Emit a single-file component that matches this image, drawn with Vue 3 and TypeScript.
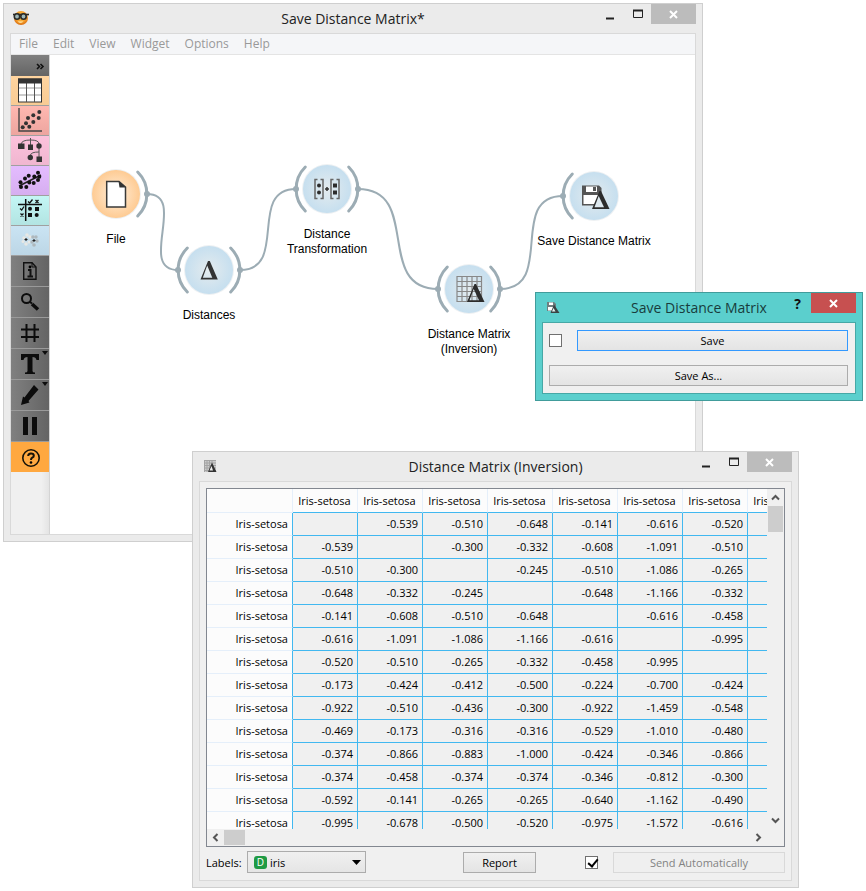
<script setup lang="ts">
import { computed, ref } from 'vue'

interface WidgetNode {
  id: string
  title: string[]
  x: number
  y: number
  tone: 'orange' | 'blue'
  input: boolean
  output: boolean
}

const menus: string[] = ['File', 'Edit', 'View', 'Widget', 'Options', 'Help']

const nodes: WidgetNode[] = [
  { id: 'file', title: ['File'], x: 66, y: 139, tone: 'orange', input: false, output: true },
  { id: 'distances', title: ['Distances'], x: 159, y: 215, tone: 'blue', input: true, output: true },
  { id: 'transform', title: ['Distance', 'Transformation'], x: 277, y: 134, tone: 'blue', input: true, output: true },
  { id: 'matrix', title: ['Distance Matrix', '(Inversion)'], x: 419, y: 234, tone: 'blue', input: true, output: true },
  { id: 'save', title: ['Save Distance Matrix'], x: 544, y: 141, tone: 'blue', input: true, output: false },
]

const ANCHOR = 31

const links = computed<string[]>(() =>
  nodes.slice(1).map((to, i) => {
    const from = nodes[i]
    const x1 = from.x + ANCHOR
    const x2 = to.x - ANCHOR
    const reach = Math.round(Math.hypot(x2 - x1, to.y - from.y) / 2)
    return `M${x1} ${from.y}C${x1 + reach} ${from.y} ${x2 - reach} ${to.y} ${x2} ${to.y}`
  }),
)

const columns: string[] = Array.from({ length: 8 }, () => 'Iris-setosa')

const rows: string[][] = [
  ['', '-0.539', '-0.510', '-0.648', '-0.141', '-0.616', '-0.520', ''],
  ['-0.539', '', '-0.300', '-0.332', '-0.608', '-1.091', '-0.510', ''],
  ['-0.510', '-0.300', '', '-0.245', '-0.510', '-1.086', '-0.265', ''],
  ['-0.648', '-0.332', '-0.245', '', '-0.648', '-1.166', '-0.332', ''],
  ['-0.141', '-0.608', '-0.510', '-0.648', '', '-0.616', '-0.458', ''],
  ['-0.616', '-1.091', '-1.086', '-1.166', '-0.616', '', '-0.995', ''],
  ['-0.520', '-0.510', '-0.265', '-0.332', '-0.458', '-0.995', '', ''],
  ['-0.173', '-0.424', '-0.412', '-0.500', '-0.224', '-0.700', '-0.424', ''],
  ['-0.922', '-0.510', '-0.436', '-0.300', '-0.922', '-1.459', '-0.548', ''],
  ['-0.469', '-0.173', '-0.316', '-0.316', '-0.529', '-1.010', '-0.480', ''],
  ['-0.374', '-0.866', '-0.883', '-1.000', '-0.424', '-0.346', '-0.866', ''],
  ['-0.374', '-0.458', '-0.374', '-0.374', '-0.346', '-0.812', '-0.300', ''],
  ['-0.592', '-0.141', '-0.265', '-0.265', '-0.640', '-1.162', '-0.490', ''],
  ['-0.995', '-0.678', '-0.500', '-0.520', '-0.975', '-1.572', '-0.616', ''],
]

const label = ref('iris')
const autoSave = ref(false)
const autoSend = ref(true)
</script>

<template>
  <main class="desktop">
    <section class="window main-window">
      <header class="titlebar">
        <svg class="app-icon" viewBox="0 0 18 16" width="18" height="16">
          <defs>
            <radialGradient id="face" cx=".5" cy=".4" r=".6">
              <stop offset="0" stop-color="#ffd257" />
              <stop offset=".6" stop-color="#f8a22c" />
              <stop offset="1" stop-color="#d96f12" />
            </radialGradient>
          </defs>
          <circle cx="9" cy="8" r="7" fill="url(#face)" />
          <path d="M1 4.500H17" stroke="#2b2b28" stroke-width="1.600" />
          <circle cx="5" cy="6.500" r="2.700" fill="#9fb8b8" stroke="#2b2b28" stroke-width="1.600" />
          <circle cx="11.500" cy="6.500" r="2.700" fill="#9fb8b8" stroke="#2b2b28" stroke-width="1.600" />
          <path d="M5.500 11.500Q8.500 14 11.500 11.500Z" fill="#fff2b8" />
        </svg>
        <h1>Save Distance Matrix*</h1>
        <div class="controls">
          <button type="button" aria-label="Minimize"><svg width="9" height="11"><path d="M0 9.500H8" stroke="#222" stroke-width="2" /></svg></button>
          <button type="button" aria-label="Maximize"><svg width="10" height="11"><path d="M.5 1V8.500H9.500V1" fill="none" stroke="#222" /><path d="M0 1.500H10" stroke="#222" stroke-width="2" /></svg></button>
          <button type="button" class="close" aria-label="Close"><svg width="9" height="9"><path d="M1 1L8 8M8 1L1 8" stroke="#fff" stroke-width="2" /></svg></button>
        </div>
      </header>
      <div class="frame">
        <nav class="menubar">
          <button v-for="m in menus" :key="m" type="button">{{ m }}</button>
        </nav>
        <div class="workspace">
          <aside class="toolbox">
            <button type="button" class="expand" aria-label="Expand">
              <svg width="38" height="20"><path d="M26 8L28.500 10.500L26 13M29.500 8L32 10.500L29.500 13" fill="none" stroke="#111" stroke-width="1.600" /></svg>
            </button>
            <button type="button" class="cat data" aria-label="Data">
              <svg width="38" height="29">
                <rect x="7.500" y="3" width="23" height="23" fill="#fff" stroke="#333" />
                <path d="M8 12H30M8 19H30" stroke="#ccc" stroke-width="2" />
                <path d="M15.500 6V26M23.500 6V26" stroke="#555" />
                <path d="M7 5H31" stroke="#333" stroke-width="5" />
              </svg>
            </button>
            <button type="button" class="cat visualize" aria-label="Visualize">
              <svg width="38" height="29">
                <path d="M8 2V25H31" fill="none" stroke="#444" stroke-width="1.400" />
                <g fill="#333"><circle cx="28.300" cy="6" r="2" /><circle cx="22.300" cy="9.300" r="2" /><circle cx="27.700" cy="12" r="2" /><circle cx="17" cy="12" r="2" /><circle cx="22.300" cy="16" r="2" /><circle cx="15" cy="17.300" r="2" /><circle cx="18.300" cy="20.700" r="2" /><circle cx="11.700" cy="21.300" r="2" /></g>
              </svg>
            </button>
            <button type="button" class="cat model" aria-label="Model">
              <svg width="38" height="29">
                <path d="M10 8Q11 4 19.500 4Q28 4 28 8M19.500 2V9M28 12V21M19.500 19Q20 16 28 16" fill="none" stroke="#555" />
                <g fill="#333"><rect x="7" y="7.500" width="6.500" height="5.500" /><rect x="17" y="8.500" width="5" height="5.500" /><circle cx="28" cy="10" r="2.700" /><circle cx="19.300" cy="21.500" r="2.700" /><rect x="25.500" y="20.500" width="5.500" height="5.500" /></g>
              </svg>
            </button>
            <button type="button" class="cat regression" aria-label="Regression">
              <svg width="38" height="29">
                <path d="M8 20L30 9" stroke="#222" stroke-width="1.600" />
                <g fill="#111"><circle cx="27" cy="6.700" r="2" /><circle cx="17.700" cy="9.700" r="2" /><circle cx="23.300" cy="10.500" r="2" /><circle cx="28.300" cy="10.700" r="2" /><circle cx="14" cy="12.500" r="2" /><circle cx="9.500" cy="16.300" r="2" /><circle cx="18.300" cy="16.500" r="2" /><circle cx="22.700" cy="17" r="2" /><circle cx="27" cy="14" r="2" /><circle cx="10" cy="21" r="2" /><circle cx="15.300" cy="21" r="2" /></g>
              </svg>
            </button>
            <button type="button" class="cat evaluate" aria-label="Evaluate">
              <svg width="38" height="29">
                <path d="M14.700 3V25M7 8.500H31" stroke="#111" stroke-width="1.500" />
                <path d="M17 5.500L18.700 7L21.500 3.500M24.500 4L27.500 7M27.500 4L24.500 7M9 12.500L10.700 14L13 10.500M9.500 17.500L12.500 20.500M12.500 17.500L9.500 20.500" fill="none" stroke="#111" stroke-width="1.300" />
                <g fill="#111"><circle cx="19" cy="12.700" r="2" /><rect x="24" y="11" width="4" height="4" /><rect x="17" y="17" width="4" height="4" /><circle cx="25.700" cy="19" r="2" /></g>
              </svg>
            </button>
            <button type="button" class="cat unsupervised" aria-label="Unsupervised">
              <svg width="38" height="29">
                <g fill="#e8e8e4"><circle cx="13" cy="12" r="1.800" /><circle cx="16" cy="9" r="1.800" /><circle cx="19" cy="11" r="1.800" /><circle cx="12" cy="15.500" r="1.500" /><circle cx="15" cy="18" r="1.800" /><circle cx="18" cy="16" r="1.500" /></g>
                <g fill="#aeb8bd"><circle cx="22" cy="11" r="1.800" /><circle cx="25" cy="11" r="1.700" /><circle cx="26" cy="15" r="1.700" /><circle cx="21" cy="16" r="1.700" /><circle cx="23" cy="19" r="1.800" /></g>
                <path d="M13.500 13.500H16.500M15 12V15M21.500 14.500H24.500M23 13V16" stroke="#222" stroke-width="1.100" />
              </svg>
            </button>
            <button type="button" class="tool" aria-label="Info">
              <svg width="38" height="30">
                <path d="M12.700 6.700H21L25 11V23.300H12.700Z" fill="none" stroke="#111" stroke-width="1.400" />
                <path d="M21 6.500V11H25" fill="none" stroke="#111" />
                <path d="M17 14H19.500V20M16.500 20.500H22" fill="none" stroke="#111" stroke-width="2" /><circle cx="19" cy="11" r="1.400" />
              </svg>
            </button>
            <button type="button" class="tool" aria-label="Zoom">
              <svg width="38" height="30"><circle cx="15.500" cy="11.500" r="4.500" fill="none" stroke="#0c0c0c" stroke-width="2" /><path d="M19 15L21 16.500" stroke="#0c0c0c" stroke-width="2" /><path d="M21 17L27 22.500" stroke="#0c0c0c" stroke-width="3.500" /></svg>
            </button>
            <button type="button" class="tool" aria-label="Grid">
              <svg width="38" height="30"><path d="M15.500 6V24M23.500 6V24M10 11.500H28M10 19H28" stroke="#0c0c0c" stroke-width="2" /></svg>
            </button>
            <button type="button" class="tool" aria-label="Text annotation">
              <svg width="38" height="30"><path d="M10 5H28V11H25.500Q25 8 21.500 8V22Q21.500 23.500 24 23.500V25H14V23.500Q16.500 23.500 16.500 22V8Q13 8 12.500 11H10Z" fill="#0c0c0c" /><path d="M31 2H37L34 6Z" fill="#0c0c0c" /></svg>
            </button>
            <button type="button" class="tool" aria-label="Arrow annotation">
              <svg width="38" height="30"><path d="M23 5L27.500 9.500L17.500 21L18.500 22.500L10 25L12 16.500L13.500 17.500Z" fill="#0c0c0c" /><path d="M31 2H37L34 6Z" fill="#0c0c0c" /></svg>
            </button>
            <button type="button" class="tool" aria-label="Pause">
              <svg width="38" height="30"><path d="M14.500 6V24M23.500 6V24" stroke="#0c0c0c" stroke-width="5" /></svg>
            </button>
            <button type="button" class="help" aria-label="Help">
              <svg width="38" height="30"><circle cx="20" cy="16" r="8.200" fill="none" stroke="#161208" stroke-width="1.600" /><path d="M17.200 14Q17.200 11.500 20 11.500Q22.800 11.500 22.800 13.700Q22.800 15 21.300 15.700Q20 16.500 20 18" fill="none" stroke="#161208" stroke-width="2" /><circle cx="20" cy="20.500" r="1.300" /></svg>
            </button>
          </aside>
          <div class="canvas">
            <svg class="links"><path v-for="d in links" :key="d" :d="d" /></svg>
            <div v-for="n in nodes" :key="n.id" class="node" :style="{ left: n.x + 'px', top: n.y + 'px' }">
              <svg class="glyph" viewBox="-36 -36 72 72" width="72" height="72">
                <defs>
                  <radialGradient :id="'disc-' + n.id">
                    <stop offset="0" :stop-color="n.tone === 'orange' ? '#ffefdc' : '#e4ebee'" />
                    <stop offset="1" :stop-color="n.tone === 'orange' ? '#fecb93' : '#c6dfef'" />
                  </radialGradient>
                </defs>
                <circle r="25" fill="#eef1f3" />
                <circle r="24" :fill="`url(#disc-${n.id})`" />
                <g v-if="n.input" class="anchor">
                  <path d="M-21.700 -22A31 31 0 0 0 -21.700 22" /><circle cx="-31" cy="0" r="3" />
                </g>
                <g v-if="n.output" class="anchor">
                  <path d="M21.700 -22A31 31 0 0 1 21.700 22" /><circle cx="31" cy="0" r="3" />
                </g>
                <g v-if="n.id === 'file'">
                  <path d="M-9.300 -12.500H3L9.500 -7V13H-9.300Z" fill="#fff" stroke="#3a3a38" stroke-width="1.500" />
                  <path d="M2.500 -13L10 -6.500H3.500Z" fill="#333" />
                </g>
                <path v-else-if="n.id === 'distances'" fill="#333" fill-rule="evenodd" d="M-1 -9H.8L8.800 9.500H-8.500ZM-1.800 -4.500L-6.200 7.800H3.300Z" />
                <g v-else-if="n.id === 'transform'">
                  <path d="M-9.500 -9.500H-12V9.500H-9.500M-6.500 -9.500H-4V9.500H-6.500M6.500 -9.500H4V9.500H6.500M9.500 -9.500H12V9.500H9.500" fill="none" stroke="#666" stroke-width="1.500" />
                  <g fill="#2c2c2c"><circle cx="-8" cy="-3.500" r="2" /><circle cx="-8" cy="3.500" r="2" /><rect x="6" y="-5.500" width="4" height="4" /><rect x="6" y="1.500" width="4" height="4" /></g>
                  <path d="M-2 0H2M0 -2V2" stroke="#333" stroke-width="1.500" />
                </g>
                <g v-else-if="n.id === 'matrix'">
                  <path d="M-12 -12.500H12.500V12.500H-12ZM-12 -7.500H12.500M-12 -2.500H12.500M-12 2.500H12.500M-12 7.500H12.500M-7 -12.500V12.500M-2 -12.500V12.500M3 -12.500V12.500M8 -12.500V12.500" fill="none" stroke="#888" stroke-width="1.200" />
                  <path d="M5.500 -5H7L15.500 13H-2ZM4.700 0L.5 11.300H10Z" fill="#2c2c2c" fill-rule="evenodd" />
                </g>
                <g v-else>
                  <path d="M-12 -10.500H5L7.500 -8V9.500H-12Z" fill="#555" />
                  <rect x="-8" y="-9.500" width="11" height="5.500" fill="#fff" /><rect x="-1" y="-9" width="3" height="4" fill="#555" />
                  <rect x="-10.500" y="-1" width="16" height="9" fill="#fff" />
                  <path d="M5.500 -5H7L15.500 13H-2Z" fill="#2c2c2c" /><path d="M4.700 0L.5 11.300H10Z" fill="#dde8ee" />
                </g>
              </svg>
              <div class="caption"><div v-for="t in n.title" :key="t">{{ t }}</div></div>
            </div>
          </div>
        </div>
      </div>
    </section>

    <section class="window dialog">
      <header class="titlebar">
        <svg class="app-icon" viewBox="0 0 18 16" width="18" height="16">
          <path d="M3 3H10L12 5V12H3Z" fill="#6f7f80" /><path d="M5 3.500H9V6H5ZM4 8H9V11.500H4Z" fill="#fff" />
          <path d="M10 5.500L15.500 14H6.500Z" fill="#3a4444" /><path d="M9.500 9L11.500 12.500H8Z" fill="#e6f4f4" />
        </svg>
        <h2>Save Distance Matrix</h2>
        <div class="controls">
          <button type="button" class="hint">?</button>
          <button type="button" class="close" aria-label="Close"><svg width="9" height="9"><path d="M1 1L8 8M8 1L1 8" stroke="#fff" stroke-width="2" /></svg></button>
        </div>
      </header>
      <form class="frame save-form" @submit.prevent>
        <div class="save-row">
          <input v-model="autoSave" type="checkbox" aria-label="Save automatically" />
          <button type="submit" class="push primary">Save</button>
        </div>
        <button type="button" class="push">Save As...</button>
      </form>
    </section>

    <section class="window matrix-window">
      <header class="titlebar">
        <svg class="app-icon" viewBox="0 0 18 16" width="18" height="16">
          <rect x="3" y="2" width="12" height="12" fill="#ccc" />
          <path d="M3.500 2V14M6 2V14M8.500 2V14M11 2V14M3 2.500H15M3 5H15M3 7.500H15M3 10H15M3 12.500H15" stroke="#a4a4a4" />
          <path d="M11 4.500L15.500 14H7Z" fill="#333" /><path d="M10.500 8L12 12.500H8.500Z" fill="#eee" />
        </svg>
        <h2>Distance Matrix (Inversion)</h2>
        <div class="controls">
          <button type="button" aria-label="Minimize"><svg width="9" height="11"><path d="M0 9.500H8" stroke="#222" stroke-width="2" /></svg></button>
          <button type="button" aria-label="Maximize"><svg width="10" height="11"><path d="M.5 1V8.500H9.500V1" fill="none" stroke="#222" /><path d="M0 1.500H10" stroke="#222" stroke-width="2" /></svg></button>
          <button type="button" class="close" aria-label="Close"><svg width="9" height="9"><path d="M1 1L8 8M8 1L1 8" stroke="#fff" stroke-width="2" /></svg></button>
        </div>
      </header>
      <div class="frame matrix-body">
        <div class="table-box">
          <div class="viewport">
            <table>
              <thead>
                <tr><td class="corner"></td><th v-for="(c, i) in columns" :key="i" scope="col">{{ c }}</th></tr>
              </thead>
              <tbody>
                <tr v-for="(r, i) in rows" :key="i">
                  <th scope="row">Iris-setosa</th>
                  <td v-for="(v, j) in r" :key="j">{{ v }}</td>
                </tr>
              </tbody>
            </table>
          </div>
          <div class="vbar">
            <button type="button" aria-label="Scroll up"><svg width="9" height="7"><path d="M1 5.500L4.500 2L8 5.500" fill="none" stroke="#555" stroke-width="2" /></svg></button>
            <div class="thumb"></div>
            <button type="button" aria-label="Scroll down"><svg width="9" height="7"><path d="M1 1.500L4.500 5L8 1.500" fill="none" stroke="#555" stroke-width="2" /></svg></button>
          </div>
          <div class="hbar">
            <button type="button" aria-label="Scroll left"><svg width="7" height="9"><path d="M5.500 1L2 4.500L5.500 8" fill="none" stroke="#555" stroke-width="2" /></svg></button>
            <div class="thumb"></div>
            <button type="button" aria-label="Scroll right"><svg width="7" height="9"><path d="M1.500 1L5 4.500L1.500 8" fill="none" stroke="#555" stroke-width="2" /></svg></button>
          </div>
        </div>
        <div class="footer">
          <div class="labels">
            <label for="labels">Labels:</label>
            <div class="combo">
              <span class="badge">D</span>
              <select id="labels" v-model="label"><option>iris</option></select>
              <svg class="arrow" width="9" height="5"><path d="M0 0H9L4.500 5Z" fill="#000" /></svg>
            </div>
          </div>
          <button type="button" class="push report">Report</button>
          <div class="send">
            <input v-model="autoSend" type="checkbox" aria-label="Send automatically" />
            <button type="button" class="push" disabled>Send Automatically</button>
          </div>
        </div>
      </div>
    </section>
  </main>
</template>

<style>
body {
  background: #fff;
}
</style>

<style scoped>
.desktop {
  position: relative;
  min-height: 100vh;
  overflow: hidden;
  font-family: 'Open Sans', 'Noto Sans', sans-serif;
  font-size: 11px;
  color: #000;
}
.desktop * {
  box-sizing: border-box;
}
button,
select {
  font: inherit;
  color: inherit;
  margin: 0;
  padding: 0;
  border: 0;
  border-radius: 0;
  background: none;
}
svg {
  display: block;
}
.window {
  position: absolute;
  padding: 0 6px 6px;
  border: 1px solid #cfcfcf;
  background: #ebebeb;
}
.main-window {
  top: 3px;
  left: 3px;
  right: 163px;
}
.dialog {
  top: 292px;
  left: 535px;
  right: 3px;
  border-color: #419c9b;
  background: #5bcfcd;
}
.matrix-window {
  top: 451px;
  left: 192px;
  right: 67px;
}
.titlebar {
  display: grid;
  grid-template-columns: 1fr auto 1fr;
  height: 29px;
}
.app-icon {
  margin: 6px 0 0 2px;
}
h1,
h2 {
  margin: 0;
  font-size: 14px;
  line-height: 30px;
  font-weight: 400;
  color: #222;
  white-space: nowrap;
}
.dialog h2 {
  color: #183c3c;
}
.controls {
  display: flex;
  justify-content: flex-end;
}
.controls button {
  display: flex;
  align-items: center;
  justify-content: center;
  width: 27px;
  height: 20px;
}
.controls .close {
  width: 45px;
  background: #bcbcbc;
}
.dialog .controls .close {
  background: #c75050;
}
.controls .hint {
  font-size: 14px;
  font-weight: 700;
  color: #111;
}
.frame {
  border: 1px solid #d9d9d9;
  background: #f0f0f0;
}
.menubar {
  display: flex;
  height: 21px;
  padding-left: 1px;
  border-bottom: 1px solid #e4e4e4;
  background: #f5f6f8;
}
.menubar button {
  padding: 0 8px 0 7px;
  font-size: 12px;
  line-height: 20px;
  color: #999;
}
.workspace {
  display: flex;
}
.toolbox {
  flex: none;
  width: 39px;
  border-right: 1px solid #d4d4d4;
  background: linear-gradient(90deg, #f0f0f0 80%, #e4e4e4);
}
.toolbox button {
  display: block;
  width: 100%;
}
.toolbox .expand {
  height: 21px;
  background: linear-gradient(#808080, #646464);
}
.toolbox .cat {
  height: 30px;
  border-bottom: 1px solid #a0a0a0;
}
.toolbox .data { background: linear-gradient(#ffd49f, #f8cb94); }
.toolbox .visualize { background: linear-gradient(#ffb8b1, #eda59f); }
.toolbox .model { background: linear-gradient(#fcc2dc, #f0b6d0); }
.toolbox .regression { background: linear-gradient(#e4bcff, #d6aef0); }
.toolbox .evaluate { background: linear-gradient(#c4f6f5, #b2e4e2); }
.toolbox .unsupervised { background: linear-gradient(#cae4f3, #bcd6e6); }
.toolbox .tool {
  height: 31px;
  border-bottom: 1px solid #9a9a9a;
  background: linear-gradient(90deg, #808080, #646464);
}
.toolbox .help {
  height: 30px;
  background: #ffa840;
}
.canvas {
  position: relative;
  flex: 1;
  height: 479px;
  background: #fff;
}
.links {
  position: absolute;
  width: 100%;
  height: 100%;
}
.links path {
  fill: none;
  stroke: #9cacb4;
  stroke-width: 2;
}
.node {
  position: absolute;
  width: 0;
}
.glyph {
  margin: -36px 0 2px -36px;
}
.anchor path {
  fill: none;
  stroke: #9cacb4;
  stroke-width: 3;
  stroke-linecap: round;
}
.anchor circle {
  fill: #9cacb4;
}
.caption {
  display: flex;
  flex-direction: column;
  align-items: center;
  font-family: 'Liberation Sans', Arial, sans-serif;
  font-size: 12px;
  line-height: 15px;
  white-space: nowrap;
}
.dialog .frame {
  border-color: #46a8a6;
}
.save-form {
  display: flex;
  flex-direction: column;
  gap: 14px;
  padding: 7px 7px 7px 6px;
}
.save-row {
  display: flex;
  align-items: center;
  gap: 15px;
}
.push {
  height: 21px;
  border: 1px solid #acacac;
  background: linear-gradient(#f0f0f0, #e4e4e4);
  line-height: 19px;
}
.save-row .push,
.send .push {
  flex: 1;
}
.push.primary {
  border-color: #3399ff;
}
.push:disabled {
  border-color: #d9d9d9;
  background: #efefef;
  color: #838383;
}
input[type='checkbox'] {
  appearance: none;
  flex: none;
  width: 13px;
  height: 13px;
  margin: 0;
  border: 1px solid #707070;
  background: #fff;
}
input[type='checkbox']:checked::after {
  content: '';
  display: block;
  width: 4px;
  height: 8px;
  margin: 0 0 0 4px;
  border: solid #000;
  border-width: 0 2px 2px 0;
  transform: rotate(40deg);
}
.matrix-body {
  padding: 6px 6px 7px;
}
.table-box {
  display: grid;
  grid-template-columns: 1fr 17px;
  grid-template-rows: 340px 17px;
  border: 1px solid #828790;
}
.viewport {
  overflow: hidden;
}
table {
  width: 606px;
  table-layout: fixed;
  border-collapse: separate;
  border-spacing: 0;
}
th,
td {
  width: 65px;
  height: 23px;
  padding: 0 4px 0 0;
  border: solid #41b8f0;
  border-width: 0 1px 1px 0;
  font-weight: 400;
  line-height: 22px;
  text-align: right;
}
thead th,
tbody th,
.corner {
  border-color: #e5effa;
  background: #fcfcfc;
}
.corner {
  width: 86px;
}
thead th {
  height: 24px;
  padding: 0 1px 0 0;
  border-bottom-color: #41b8f0;
  text-align: center;
}
tbody th {
  border-right-color: #41b8f0;
}
.vbar,
.hbar {
  display: flex;
}
.vbar {
  flex-direction: column;
}
.vbar button,
.hbar button {
  display: flex;
  align-items: center;
  justify-content: center;
  width: 17px;
  height: 17px;
}
.thumb {
  background: #cdcdcd;
}
.vbar .thumb {
  height: 26px;
  margin: 0 1px;
}
.hbar .thumb {
  width: 21px;
  margin: 1px 0;
}
.vbar button:last-child {
  margin-top: auto;
}
.hbar button:last-child {
  margin-left: auto;
}
.footer {
  display: grid;
  grid-template-columns: 257px 122px 1fr;
  align-items: center;
  padding-top: 4px;
}
.labels,
.send {
  display: flex;
  align-items: center;
}
.labels {
  gap: 5px;
}
.labels label {
  width: 36px;
  white-space: nowrap;
}
.combo {
  position: relative;
}
.combo select {
  appearance: none;
  width: 119px;
  height: 22px;
  padding: 0 20px 0 22px;
  border: 1px solid #acacac;
  background: linear-gradient(#f0f0f0, #e5e5e5);
}
.badge {
  position: absolute;
  top: 5px;
  left: 7px;
  width: 13px;
  height: 13px;
  border-radius: 3px;
  background: #1f9a44;
  color: #fff;
  font-size: 10px;
  line-height: 13px;
  text-align: center;
}
.arrow {
  position: absolute;
  top: 9px;
  right: 5px;
}
.report {
  width: 73px;
}
.send {
  gap: 15px;
}
</style>
